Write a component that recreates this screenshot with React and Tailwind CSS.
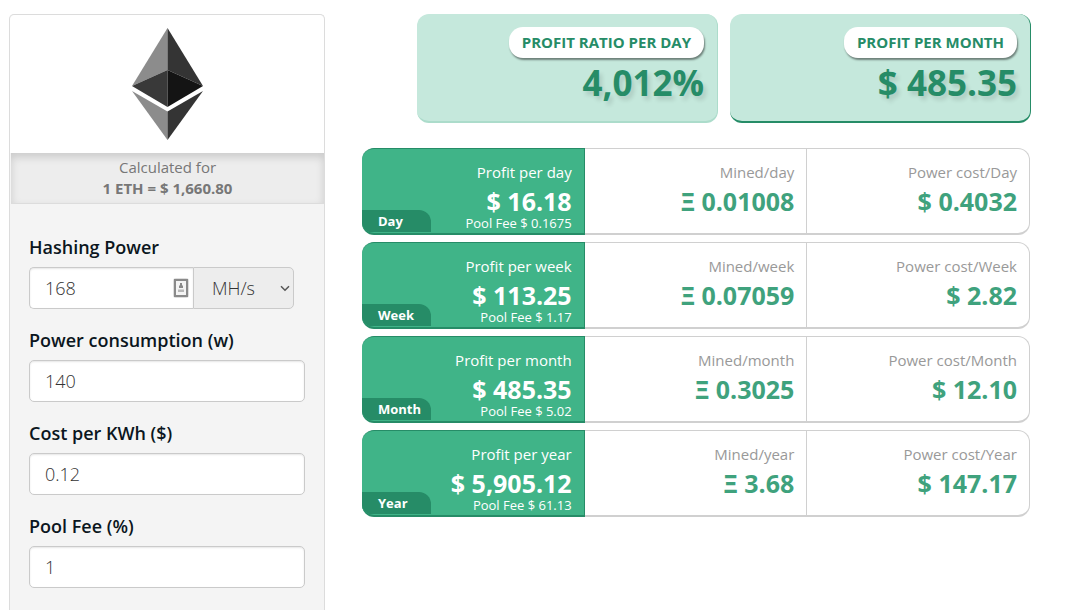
import React from "react";

const fields = [
  { id: "power", label: "Power consumption (w)", value: "140" },
  { id: "cost", label: "Cost per KWh ($)", value: "0.12" },
  { id: "fee", label: "Pool Fee (%)", value: "1" },
];

const rows = [
  { tab: "Day", unit: "day", profit: "$ 16.18", fee: "$ 0.1675", mined: "0.01008", cost: "$ 0.4032" },
  { tab: "Week", unit: "week", profit: "$ 113.25", fee: "$ 1.17", mined: "0.07059", cost: "$ 2.82" },
  { tab: "Month", unit: "month", profit: "$ 485.35", fee: "$ 5.02", mined: "0.3025", cost: "$ 12.10" },
  { tab: "Year", unit: "year", profit: "$ 5,905.12", fee: "$ 61.13", mined: "3.68", cost: "$ 147.17" },
];

function EthLogo() {
  return (
    <svg width="72" height="114" viewBox="0 0 72 114" aria-label="Ethereum" role="img">
      <path fill="#8c8c8c" d="M36.5 1 1 59 36.5 43Z" />
      <path fill="#343434" d="M36.5 1 72 59 36.5 43Z" />
      <path fill="#393939" d="M36.5 43 1 59 36.5 80Z" />
      <path fill="#141414" d="M36.5 43 72 59 36.5 80Z" />
      <path fill="#8c8c8c" d="M1 64 36.5 84.5 36.5 113Z" />
      <path fill="#343434" d="M72 64 36.5 84.5 36.5 113Z" />
    </svg>
  );
}

function AutofillIcon() {
  return (
    <svg width="16" height="20" viewBox="0 0 16 20" aria-hidden="true">
      <rect x="2" y="2" width="12" height="16" rx="1" fill="#fff" stroke="#dedede" strokeWidth="4" />
      <rect x="2" y="2" width="12" height="16" fill="#f4f4f4" stroke="#8a8a8a" strokeWidth="2" />
      <path fill="#8a8a8a" d="M7 5h2v2l1 1v2H6V8l1-1Z" />
      <path fill="#b8b8b8" d="M5 11.5h6V14H5Z" />
    </svg>
  );
}

function Label({ htmlFor, children }) {
  return (
    <label htmlFor={htmlFor} className="mb-2 block text-lg leading-6 font-semibold text-[#0b1620]">
      {children}
    </label>
  );
}

const inputBase =
  "h-[42px] w-full border border-[#cacaca] bg-white pl-[15px] text-lg font-light text-[#333] shadow-[inset_0_1px_2px_rgba(10,10,10,0.1)] outline-none";

function Sidebar() {
  return (
    <aside className="w-[316px] shrink-0 rounded-t-[5px] border border-b-0 border-[#dcdcdc] bg-[#f4f4f4]">
      <div className="flex h-[138px] items-center justify-center rounded-t-[5px] bg-white">
        <EthLogo />
      </div>
      <div className="ml-px border-b border-[#dcdcdc] bg-[#ededed] py-1 text-center text-[15px] leading-[21px] text-[#777] shadow-[inset_0_4px_8px_rgba(0,0,0,0.15)]">
        <p>Calculated for</p>
        <p className="font-bold">1 ETH = $ 1,660.80</p>
      </div>
      <form className="flex flex-col gap-[19px] px-[19px] pt-[31px]">
        <div>
          <Label htmlFor="hash">Hashing Power</Label>
          <div className="mr-[11px] flex">
            <div className="relative flex-1">
              <input id="hash" defaultValue="168" className={inputBase + " rounded-l-[5px] border-r-0"} />
              <span className="absolute top-[11px] right-1">
                <AutofillIcon />
              </span>
            </div>
            <div className="relative w-[101px]">
              <select
                aria-label="Hash rate unit"
                defaultValue="MH/s"
                className="h-[42px] w-full appearance-none rounded-r-[5px] border border-[#cacaca] bg-[#ededed] pl-[18px] text-lg font-light text-[#333] outline-none"
              >
                <option>MH/s</option>
                <option>GH/s</option>
              </select>
              <svg className="pointer-events-none absolute top-[18px] right-1" width="10" height="7" viewBox="0 0 10 7" aria-hidden="true">
                <path d="M1 1.2 5 5.2 9 1.2" fill="none" stroke="#555" strokeWidth="1.5" />
              </svg>
            </div>
          </div>
        </div>
        {fields.map((f) => (
          <div key={f.id}>
            <Label htmlFor={f.id}>{f.label}</Label>
            <input id={f.id} defaultValue={f.value} className={inputBase + " rounded-[5px]"} />
          </div>
        ))}
      </form>
    </aside>
  );
}

function Highlight({ title, value, edge }) {
  return (
    <div className={"flex h-[109px] flex-col items-end rounded-xl border-r border-b-2 bg-[#c5e8dc] pt-[13px] pr-[13px] " + edge}>
      <h2 className="rounded-[14px] bg-white px-[13px] text-[15px] leading-[31px] font-bold text-[#268c67] shadow-[1px_2px_2px_rgba(0,0,0,0.45)]">
        {title}
      </h2>
      <p className="mt-[3px] text-[35px] leading-[44px] font-bold text-[#268c67] [text-shadow:3px_4px_4px_rgba(0,0,0,0.12)]">
        {value}
      </p>
    </div>
  );
}

function Stat({ label, value, className }) {
  return (
    <div className={"border-y border-r border-b-2 border-[#d0d0d0] pt-[11px] pr-3 text-right " + className}>
      <p className="text-[15px] leading-6 text-[#999]">{label}</p>
      <p className="mt-[3px] text-[25px] leading-7 font-bold text-[#3fa27d]">{value}</p>
    </div>
  );
}

function PeriodRow({ row }) {
  return (
    <section className="grid h-[87px] grid-cols-3">
      <div className="relative overflow-hidden rounded-l-xl border border-b-2 border-l-0 border-[#268c67] bg-[#40b488] pt-[11px] pr-3 text-right text-white">
        <p className="text-[15px] leading-6">Profit per {row.unit}</p>
        <p className="mt-[3px] text-[25px] leading-7 font-bold">{row.profit}</p>
        <p className="text-[13px] leading-4">Pool Fee {row.fee}</p>
        <span className="absolute bottom-px left-0 h-[22px] w-[69px] rounded-tr-xl bg-[#268c67] pl-4 text-left text-[13px] leading-[22px] font-bold">
          {row.tab}
        </span>
      </div>
      <Stat label={"Mined/" + row.unit} value={"Ξ " + row.mined} className="" />
      <Stat label={"Power cost/" + row.tab} value={row.cost} className="rounded-r-xl" />
    </section>
  );
}

export default function App() {
  return (
    <div className="flex h-screen gap-[37px] overflow-hidden bg-white pt-[14px] pr-[57px] pl-[9px] font-['Open_Sans',sans-serif]">
      <Sidebar />
      <main className="min-w-0 flex-1">
        <div className="ml-[55px] grid grid-cols-2 gap-3">
          <Highlight title="PROFIT RATIO PER DAY" value="4,012%" edge="border-[#acdccb]" />
          <Highlight title="PROFIT PER MONTH" value="$ 485.35" edge="border-[#268c67]" />
        </div>
        <div className="mt-[25px] mr-px flex flex-col gap-[7px]">
          {rows.map((row) => (
            <PeriodRow key={row.tab} row={row} />
          ))}
        </div>
      </main>
    </div>
  );
}
